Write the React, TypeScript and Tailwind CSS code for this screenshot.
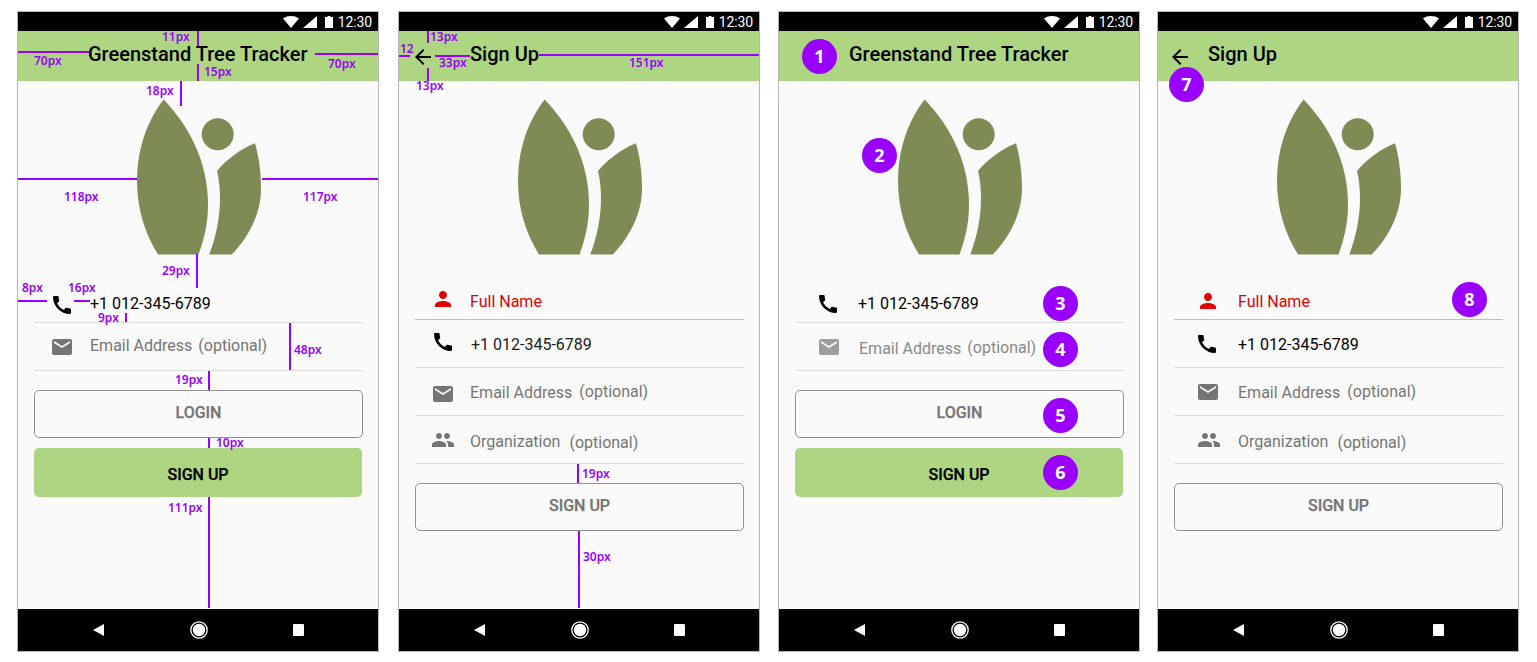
import React from "react";
import { MdArrowBack, MdCall, MdEmail, MdGroup, MdPerson } from "react-icons/md";

function Logo() {
  return (
    <svg viewBox="0 0 124 156" className="w-[124px] h-[156px] block" fill="#7f8b55">
      <path d="M26.7 0.5C50 25 71 60 71 106C71 125 67 140 61.5 155.5L21 155.5C8 135 0 110 0 82C0 50 10 22 26.7 0.5Z" />
      <circle cx="80.7" cy="35.3" r="16" />
      <path d="M118 44.3C122 58 124 74 124 90C124 116 110 140 94.7 155.5L72.3 155.5C79 138 83 118 83 100C83 90 82 80 80 72C90 60 104 50 118 44.3Z" />
    </svg>
  );
}

function StatusBar() {
  return (
    <div className="h-[19px] bg-black flex items-center justify-end pr-[6px] text-white">
      <svg viewBox="0 0 16 12" className="w-[16px] h-[12px]" fill="white">
        <path d="M0 2.5C4.5 -0.8 11.5 -0.8 16 2.5L8 12Z" />
      </svg>
      <svg viewBox="0 0 14 12" className="w-[14px] h-[12px] ml-[4px]" fill="white">
        <path d="M14 0V12H0Z" />
      </svg>
      <svg viewBox="0 0 8 12" className="w-[8px] h-[12px] ml-[8px]" fill="white">
        <path d="M2.5 0H5.5V1H8V12H0V1H2.5Z" />
      </svg>
      <span className="ml-[5px] text-[14px] leading-[19px] font-normal tracking-[-0.1px] mt-[1px]">12:30</span>
    </div>
  );
}

function NavBar() {
  return (
    <div className="h-[42px] mt-auto bg-black flex items-center pl-[75px] gap-[86px]">
      <svg viewBox="0 0 11 12" className="w-[11px] h-[12px]" fill="white">
        <path d="M11 0V12L0 6Z" />
      </svg>
      <svg viewBox="0 0 18 18" className="w-[18px] h-[18px]">
        <circle cx="9" cy="9" r="8.2" fill="none" stroke="white" strokeWidth="1.3" />
        <circle cx="9" cy="9" r="6.2" fill="white" />
      </svg>
      <div className="w-[11px] h-[12px] bg-white rounded-[1px] ml-[-1px]" />
    </div>
  );
}

function AppBar({ title, back, className }: { title: string; back?: string; className: string }) {
  return (
    <div className={"h-[50px] bg-[#aed581] flex items-center text-black " + className}>
      {back ? <MdArrowBack size={24} className={back} /> : null}
      <span className="text-[20px] leading-[22px] font-medium mb-[5px]">{title}</span>
    </div>
  );
}

function Row(props: {
  icon: React.ReactNode;
  iconClass?: string;
  textClass?: string;
  h: string;
  line?: string;
  inner?: string;
  children: React.ReactNode;
}) {
  return (
    <div
      className={
        "ml-[16px] mr-[15px] flex items-center border-b text-[16px] leading-[20px] " +
        props.h + " " + (props.line ?? "border-[#dcdcdc]") + " " + (props.inner ?? "pl-[16px] gap-[16px]")
      }
    >
      <span className={"block w-[24px] h-[24px] shrink-0 " + (props.iconClass ?? "")}>{props.icon}</span>
      <div className={"flex whitespace-nowrap " + (props.textClass ?? "")}>{props.children}</div>
    </div>
  );
}

function OutlineButton({ label, className }: { label: string; className: string }) {
  return (
    <div className={"ml-[16px] mr-[15px] h-[48px] flex items-center justify-center rounded-[5px] border border-[#929292] text-[16px] leading-[20px] font-medium text-[#757575] [-webkit-text-stroke:0.25px] " + className}>
      <span className="mb-[3px]">{label}</span>
    </div>
  );
}

function GreenButton() {
  return (
    <div className="ml-[16px] mt-[10px] w-[328px] h-[49px] flex items-center justify-center rounded-[5px] bg-[#aed581] text-[16px] leading-[20px] font-medium text-black [-webkit-text-stroke:0.25px]">
      <span className="mt-[4px]">SIGN UP</span>
    </div>
  );
}

function Phone({ children }: { children: React.ReactNode }) {
  return (
    <div className="relative w-[362px] h-[641px] shrink-0 border border-[#b5b5b5] bg-[#fafafa] flex flex-col overflow-hidden">
      {children}
    </div>
  );
}

function Mark({ className }: { className: string }) {
  return <div className={"absolute bg-[#9900ff] " + className} />;
}

function Note({ className, children }: { className: string; children: React.ReactNode }) {
  return (
    <div className={"absolute mt-[1px] text-[12px] leading-[12px] font-semibold text-[#9900ff] whitespace-nowrap [font-family:'Noto_Sans',sans-serif] " + className}>
      {children}
    </div>
  );
}

function Badge({ className, children }: { className: string; children: React.ReactNode }) {
  return (
    <div className={"absolute w-[35px] h-[35px] rounded-full bg-[#9900ff] text-white flex items-center justify-center text-[18px] font-bold [font-family:'Open_Sans',sans-serif] " + className}>
      {children}
    </div>
  );
}

const phoneIcon = <MdCall size={24} color="#000000" />;
const mailIcon = <MdEmail size={24} color="#757575" />;
const mailIconLight = <MdEmail size={24} color="#9e9e9e" />;
const personIcon = <MdPerson size={24} color="#e00000" />;
const groupIcon = <MdGroup size={24} color="#757575" />;

function SignUpForm(props: {
  person?: string;
  call?: string;
  mail?: string;
  group?: string;
  textShift?: string;
  callColor: string;
  personIconClass: string;
  callIconClass: string;
  mailIconClass: string;
}) {
  const shift = props.textShift ?? "";
  return (
    <>
      <Row h="h-[48px] mt-[17px]" line="border-[#eeaaaa]" inner={props.person} icon={personIcon} iconClass={props.personIconClass} textClass={"mt-[13px] text-[#e00000] " + shift}>
        <span>Full Name</span>
      </Row>
      <Row h="h-[48px]" inner={props.call} icon={phoneIcon} iconClass={props.callIconClass} textClass={"mt-[2px] " + props.callColor}>
        <span>+1 012-345-6789</span>
      </Row>
      <Row h="h-[48px]" inner={props.mail} icon={mailIcon} iconClass={props.mailIconClass} textClass={"mt-[2px] text-[#757575] gap-[7px] " + shift}>
        <span>Email Address</span>
        <span className="mt-[-1px]">(optional)</span>
      </Row>
      <Row h="h-[48px]" inner={props.group} icon={groupIcon} textClass={"mt-[5px] text-[#757575] gap-[9px] " + shift}>
        <span>Organization</span>
        <span className="mt-[1px]">(optional)</span>
      </Row>
      <OutlineButton label="SIGN UP" className="mt-[19px]" />
    </>
  );
}

export default function App() {
  return (
    <div className="w-[1537px] h-[662px] bg-white overflow-hidden flex pl-[17px] pt-[11px] font-['Roboto',sans-serif]">
      {/* Phone 1 */}
      <Phone>
        <StatusBar />
        <AppBar title="Greenstand Tree Tracker" className="pl-[70px]" />
        <div className="pt-[18px] pl-[119px]"><Logo /></div>
        <Row h="h-[39px] mt-[29px]" icon={phoneIcon} iconClass="mt-[4px]" textClass="mt-[2px] text-black">
          <span>+1 012-345-6789</span>
        </Row>
        <Row h="h-[48px]" icon={mailIcon} textClass="mb-[2px] text-[#757575] gap-[6px]">
          <span>Email Address</span>
          <span>(optional)</span>
        </Row>
        <OutlineButton label="LOGIN" className="mt-[19px]" />
        <GreenButton />
        <NavBar />

        <Mark className="left-[179px] top-[19px] w-[2px] h-[15px]" />
        <Note className="left-[144px] top-[18px]">11px</Note>
        <Mark className="left-0 top-[39px] w-[71px] h-[2px]" />
        <Note className="left-[16px] top-[42px]">70px</Note>
        <Mark className="left-[297px] top-[41px] w-[63px] h-[2px]" />
        <Note className="left-[310px] top-[45px]">70px</Note>
        <Mark className="left-[179px] top-[52px] w-[2px] h-[17px]" />
        <Note className="left-[186px] top-[53px]">15px</Note>
        <Mark className="left-[162px] top-[69px] w-[2px] h-[25px]" />
        <Note className="left-[128px] top-[72px]">18px</Note>
        <Mark className="left-0 top-[166px] w-[119px] h-[2px]" />
        <Mark className="left-[244px] top-[166px] w-[116px] h-[2px]" />
        <Note className="left-[46px] top-[178px]">118px</Note>
        <Note className="left-[285px] top-[178px]">117px</Note>
        <Mark className="left-[178px] top-[242px] w-[2px] h-[34px]" />
        <Note className="left-[144px] top-[252px]">29px</Note>
        <Mark className="left-0 top-[288px] w-[29px] h-[2px]" />
        <Note className="left-[4px] top-[269px]">8px</Note>
        <Mark className="left-[56px] top-[288px] w-[16px] h-[2px]" />
        <Note className="left-[50px] top-[269px]">16px</Note>
        <Mark className="left-[107px] top-[301px] w-[2px] h-[9px]" />
        <Note className="left-[80px] top-[299px]">9px</Note>
        <Mark className="left-[271px] top-[311px] w-[2px] h-[47px]" />
        <Note className="left-[276px] top-[331px]">48px</Note>
        <Mark className="left-[190px] top-[359px] w-[2px] h-[19px]" />
        <Note className="left-[157px] top-[361px]">19px</Note>
        <Mark className="left-[190px] top-[426px] w-[2px] h-[10px]" />
        <Note className="left-[198px] top-[424px]">10px</Note>
        <Mark className="left-[190px] top-[485px] w-[2px] h-[111px]" />
        <Note className="left-[150px] top-[489px]">111px</Note>
      </Phone>

      {/* Phone 2 */}
      <div className="ml-[19px]">
        <Phone>
          <StatusBar />
          <AppBar title="Sign Up" back="ml-[12px] mr-[35px] mt-[1px]" className="" />
          <div className="pt-[18px] pl-[119px]"><Logo /></div>
          <SignUpForm
            textShift="ml-[-1px]"
            callColor="text-[#212121]"
            personIconClass="mt-[6px]"
            callIconClass="mb-[4px]"
            mailIconClass="mt-[4px]"
          />
          <NavBar />

          <Mark className="left-[28px] top-[19px] w-[2px] h-[12px]" />
          <Note className="left-[31px] top-[18px]">13px</Note>
          <Mark className="left-0 top-[43px] w-[11px] h-[2px]" />
          <Note className="left-[1px] top-[30px]">12</Note>
          <Mark className="left-[36px] top-[43px] w-[35px] h-[2px]" />
          <Note className="left-[40px] top-[44px]">33px</Note>
          <Mark className="left-[140px] top-[42px] w-[220px] h-[2px]" />
          <Note className="left-[230px] top-[44px]">151px</Note>
          <Mark className="left-[28px] top-[56px] w-[2px] h-[13px]" />
          <Note className="left-[17px] top-[67px]">13px</Note>
          <Mark className="left-[178px] top-[452px] w-[2px] h-[19px]" />
          <Note className="left-[183px] top-[455px]">19px</Note>
          <Mark className="left-[179px] top-[519px] w-[2px] h-[77px]" />
          <Note className="left-[184px] top-[538px]">30px</Note>
        </Phone>
      </div>

      {/* Phone 3 */}
      <div className="ml-[18px]">
        <Phone>
          <StatusBar />
          <AppBar title="Greenstand Tree Tracker" className="pl-[70px]" />
          <div className="pt-[18px] pl-[119px]"><Logo /></div>
          <Row h="h-[39px] mt-[29px]" inner="pl-[21px] gap-[18px]" icon={phoneIcon} iconClass="mt-[2px]" textClass="mt-[2px] text-black">
            <span>+1 012-345-6789</span>
          </Row>
          <Row h="h-[48px]" inner="pl-[22px] gap-[18px]" icon={mailIconLight} textClass="mt-[4px] text-[#8a8a8a] gap-[6px]">
            <span>Email Address</span>
            <span className="mt-[-1px]">(optional)</span>
          </Row>
          <OutlineButton label="LOGIN" className="mt-[19px]" />
          <GreenButton />
          <NavBar />

          <Badge className="left-[23px] top-[27px]">1</Badge>
          <Badge className="left-[83px] top-[126px]">2</Badge>
          <Badge className="left-[264px] top-[274px]">3</Badge>
          <Badge className="left-[264px] top-[320px]">4</Badge>
          <Badge className="left-[264px] top-[386px]">5</Badge>
          <Badge className="left-[264px] top-[443px]">6</Badge>
        </Phone>
      </div>

      {/* Phone 4 */}
      <div className="ml-[17px]">
        <Phone>
          <StatusBar />
          <AppBar title="Sign Up" back="ml-[10px] mr-[16px] mt-[2px]" className="" />
          <div className="pt-[18px] pl-[119px]"><Logo /></div>
          <SignUpForm
            person="pl-[22px] gap-[18px]"
            call="pl-[21px] gap-[19px]"
            mail="pl-[22px] gap-[18px]"
            group="pl-[23px] gap-[17px]"
            callColor="text-black"
            personIconClass="mt-[10px]"
            callIconClass=""
            mailIconClass=""
          />
          <NavBar />

          <Badge className="left-[11px] top-[55px]">7</Badge>
          <Badge className="left-[294px] top-[270px]">8</Badge>
        </Phone>
      </div>
    </div>
  );
}
